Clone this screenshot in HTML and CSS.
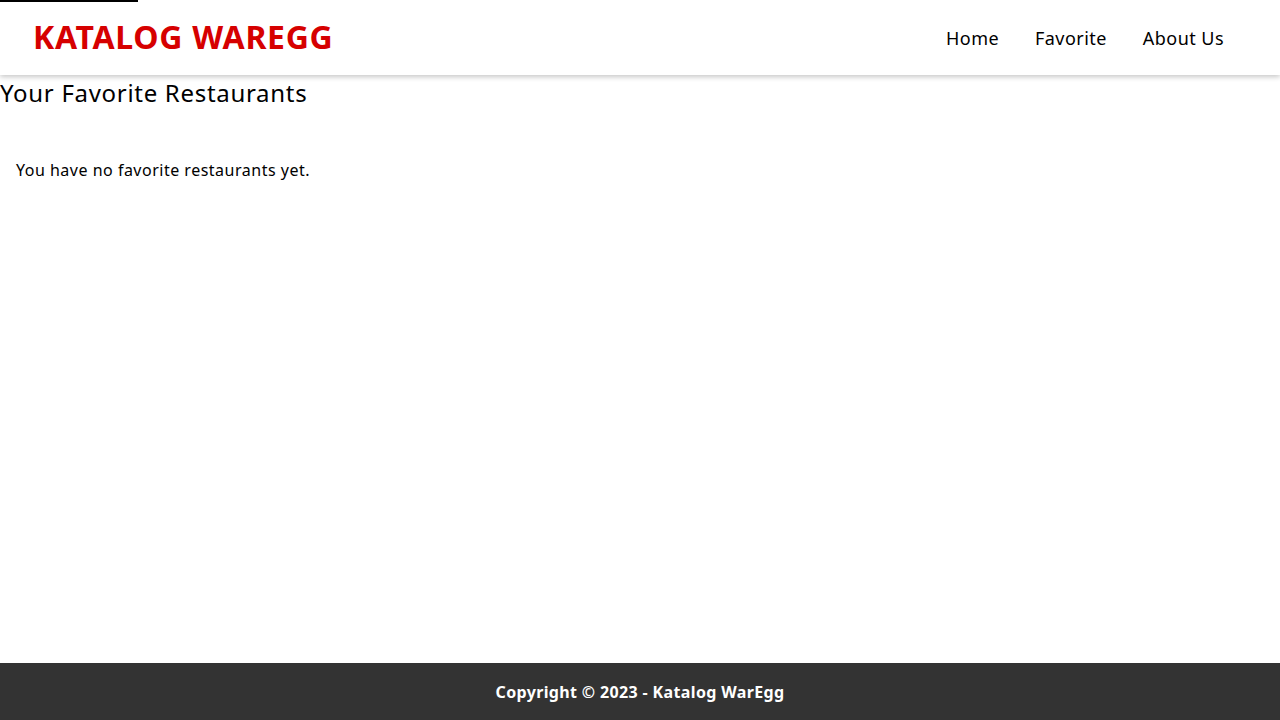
FILE: index.html
```html
<!DOCTYPE html>
<html lang="en">
<head>
<meta charset="utf-8">
<title>Katalog WarEgg</title>
<link rel="stylesheet" href="styles.css">
</head>
<body>
<div class="skip-edge" aria-hidden="true"></div>
<div class="page">
  <header class="app-bar">
    <h1 class="brand">KATALOG WAREGG</h1>
    <nav class="nav">
      <a class="nav-link" href="#">Home</a>
      <a class="nav-link" href="#">Favorite</a>
      <a class="nav-link" href="#">About Us</a>
    </nav>
  </header>
  <main class="content" id="content">
    <h2 class="title">Your Favorite Restaurants</h2>
    <div class="list">
      <p class="empty">You have no favorite restaurants yet.</p>
    </div>
  </main>
  <footer class="footer">
    <p class="copy">Copyright © 2023 - Katalog WarEgg</p>
  </footer>
</div>
</body>
</html>
```

FILE: styles.css
```css
* { box-sizing: border-box; }
html, body { margin: 0; padding: 0; height: 100%; }
body {
  font-family: "Noto Sans", "Open Sans", sans-serif;
  color: #000;
  background: #fff;
}
.skip-edge {
  position: absolute;
  top: 0;
  left: 0;
  width: 138px;
  height: 2px;
  background: #000;
  z-index: 10;
}
.page {
  min-height: 100%;
  display: flex;
  flex-direction: column;
}
.app-bar {
  height: 75px;
  display: flex;
  align-items: center;
  justify-content: space-between;
  padding: 0 56px 0 33px;
  background: #fff;
  box-shadow: 0 2px 5px rgba(0,0,0,0.22);
}
.brand {
  margin: 0;
  font-size: 32px;
  line-height: 40px;
  font-weight: 700;
  color: #d60000;
  letter-spacing: 0.7px;
  margin-top: -2px;
}
.nav {
  display: flex;
  gap: 36px;
}
.nav-link {
  font-size: 18px;
  color: #000;
  text-decoration: none;
  letter-spacing: 0.45px;
}
.content {
  flex: 1;
}
.title {
  margin: 0;
  font-size: 24px;
  font-weight: 400;
  line-height: 36px;
  letter-spacing: 0.7px;
}
.list {
  padding: 47px 16px;
}
.empty {
  margin: 0;
  font-size: 16px;
  line-height: 24px;
  letter-spacing: 0.5px;
}
.footer {
  height: 57px;
  background: #333;
  display: flex;
  align-items: center;
  justify-content: center;
}
.copy {
  margin: 0;
  color: #fff;
  font-weight: 700;
  font-size: 16px;
  letter-spacing: 0.36px;
}
```
